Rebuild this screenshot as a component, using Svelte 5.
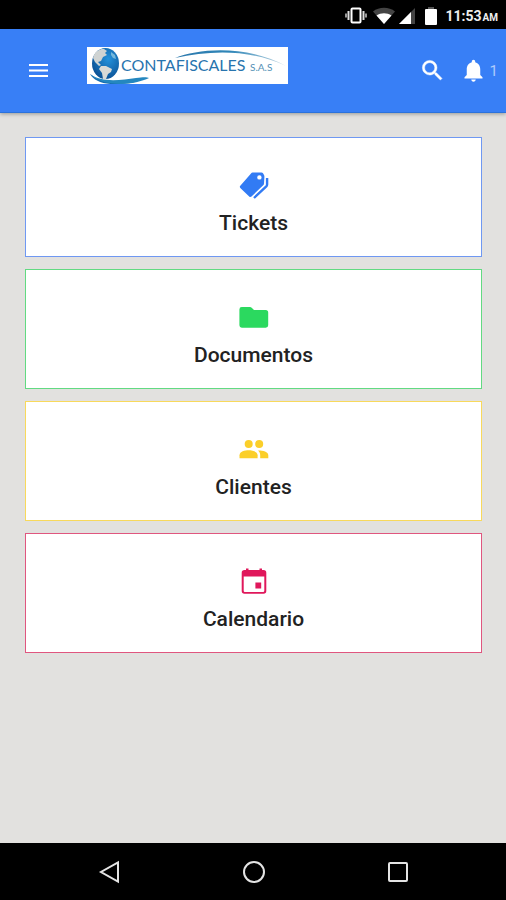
<script>
  const cards = [
    { id: "tickets", title: "Tickets" },
    { id: "documents", title: "Documentos" },
    { id: "clients", title: "Clientes" },
    { id: "calendar", title: "Calendario" }
  ];

  let notifications = 1;
</script>

<div class="screen">
  <div class="status">
    <svg width="22" height="18" viewBox="0 0 22 18" aria-hidden="true">
      <rect x="6.5" y="1.5" width="9" height="14" rx="1" fill="none" stroke="#fff" stroke-width="2" />
      <path d="M3.5 4v9M18.5 4v9" stroke="#ddd" stroke-width="2" />
      <path d="M1 6.5v4M21 6.5v4" stroke="#999" stroke-width="2" />
    </svg>
    <svg class="wifi" width="22" height="18" viewBox="0 0 22 18" aria-hidden="true">
      <path d="M0 4.5C6-.5 16-.5 22 4.5L11 17Z" fill="#444" />
      <path d="M3.500 8.500C8 5.500 14 5.500 18.500 8.500L11 17Z" fill="#fff" />
    </svg>
    <svg class="signal" width="18" height="18" viewBox="0 0 18 18" aria-hidden="true">
      <path d="M17 1v16H1Z" fill="#444" />
      <path d="M13 5V17H1Z" fill="#fff" />
    </svg>
    <svg class="battery" width="12" height="18" viewBox="0 0 12 18" aria-hidden="true">
      <path d="M3 0h6v3H3Z" fill="#555" />
      <rect y="2" width="12" height="16" rx="1" fill="#fff" />
    </svg>
    <span class="time">11:53<small>AM</small></span>
  </div>

  <header>
    <button class="iconButton" aria-label="Menu">
      <svg width="26" height="26" viewBox="0 0 26 26">
        <path d="M4 7h19M4 12.500h19M4 18h19" stroke="#fff" stroke-width="2.2" />
      </svg>
    </button>
    <a class="logo" href="#home" aria-label="Contafiscales SAS">
      <svg width="201" height="37" viewBox="0 0 201 37">
        <defs>
          <radialGradient id="globe" cx=".6" cy=".35" r=".7">
            <stop offset="0" stop-color="#2492dc" />
            <stop offset="1" stop-color="#0a4f92" />
          </radialGradient>
          <linearGradient id="arc">
            <stop offset="0" stop-color="#2d79ad" />
            <stop offset=".5" stop-color="#2f86b8" />
            <stop offset="1" stop-color="#c8dbe5" />
          </linearGradient>
        </defs>
        <rect width="201" height="37" fill="#fff" />
        <ellipse cx="18.5" cy="16.5" rx="13.5" ry="15.5" fill="url(#globe)" />
        <path d="M7 8C9 4 13 1.5 17 2l3 2-2 2 2 2-4 2-2 4-3 1 3 3-2 1-4-4-2-4Z" fill="#cfd3d2" />
        <path d="M14 19l5 0 6 3-1 3-3 2-2 5h-3l-1-6-3-4Z" fill="#d9dad6" />
        <path d="M24 5l4 3 1 4-3-1-2-3Z" fill="#73b7dc" />
        <path d="M3 27C15 37 32 35 62 31C52 33 47 37 32 37C17 38 7 34 3 27Z" fill="#176eb0" />
        <path d="M3 27C15 36 34 33 49 31C56 30 60 30 62 31C48 38 17 41 3 27Z" fill="#2487bf" />
        <path d="M88 11C113 1 160-2 199 19C163 2 124 3 88 11Z" fill="url(#arc)" />
        <text x="34" y="24" font-size="16" fill="#2874ae">CONTAFISCALES</text>
        <text x="163" y="24" font-size="10" fill="#5490b5">S.A.S</text>
      </svg>
    </a>
    <div class="actions">
      <button class="iconButton" aria-label="Buscar">
        <svg width="27" height="27" viewBox="0 0 24 24" fill="#fff" stroke="#fff" stroke-width=".4">
          <path d="M15.5 14h-.79l-.28-.27A6.47 6.47 0 0 0 16 9.5 6.5 6.5 0 1 0 9.5 16c1.61 0 3.09-.59 4.23-1.57l.27.28v.79l5 4.99L20.49 19l-4.99-5zm-6 0C7.01 14 5 11.99 5 9.5S7.01 5 9.5 5 14 7.01 14 9.5 11.99 14 9.5 14z" />
        </svg>
      </button>
      <button class="iconButton bell" aria-label="Notificaciones">
        <svg width="27" height="27" viewBox="0 0 24 24" fill="#fff">
          <path d="M12 22c1.1 0 2-.9 2-2h-4c0 1.1.89 2 2 2zm6-6v-5c0-3.07-1.64-5.64-4.5-6.32V4c0-.83-.67-1.5-1.500-1.500s-1.500.67-1.500 1.500v.68C7.63 5.36 6 7.92 6 11v5l-2 2v1h16v-1l-2-2z" />
        </svg>
        <span>{notifications}</span>
      </button>
    </div>
  </header>

  <main>
    {#each cards as card}
      <button class="card {card.id}">
        <svg width="30" height="30" viewBox="0 0 30 30" fill="currentColor" aria-hidden="true">
          {#if card.id == "tickets"}
            <path fill-rule="evenodd" d="M13.5 2.5H22.5Q23.5 2.5 24 3.2L25 5Q25.500 6 25.4 7L25 13.5Q25 14.500 24.2 15.2L12.5 26.5Q11.3 27.5 10.2 26.4L1.3 18Q.3 16.8 1.3 15.7L12 3.4Q12.7 2.5 13.5 2.5ZM20.4 5.2A2.2 2.2 0 1 0 20.4 9.6A2.2 2.2 0 1 0 20.4 5.2Z" />
            <path d="M28.1 8v6.5Q28.1 15.500 27.300 16.300L15 28" fill="none" stroke="currentColor" stroke-width="2.4" />
          {:else if card.id == "documents"}
            <path d="M2.8 5H11Q12 5 12.7 5.8L15 8H26.7Q29.2 8 29.2 10.5V23.3Q29.2 25.7 26.7 25.7H2.8Q.4 25.7 .4 23.3V7.4Q.4 5 2.8 5Z" />
          {:else if card.id == "clients"}
            <circle cx="9.7" cy="10" r="4" />
            <circle cx="20.2" cy="10" r="4" />
            <path d="M.5 24.2V21.2C.5 17.5 6 16.3 9.6 16.3S18.6 17.5 18.6 21.2V24.2Z" />
            <path d="M19 16.4C23 16.2 29.3 17.5 29.3 21.2V24.2H21.2V21.2C21.2 19 20.4 17.5 19 16.4Z" />
          {:else}
            <path fill-rule="evenodd" d="M7 2.5h2.5v1.5h11V2.5H23v1.5h1.5Q27.3 4 27.3 6.8V25Q27.3 27.7 24.5 27.7H5.5Q2.7 27.7 2.7 25V6.8Q2.7 4 5.5 4H7ZM4.7 10.5V24.7Q4.7 25.9 5.9 25.9H24.1Q25.3 25.9 25.3 24.7V10.5Z" />
            <path d="M16.4 16.6h5.8v5.8h-5.8Z" />
          {/if}
        </svg>
        <span>{card.title}</span>
      </button>
    {/each}
  </main>

  <nav>
    <button aria-label="Atrás">
      <svg width="24" height="24" viewBox="0 0 24 24">
        <path d="M20 2.5v19L3 12Z" />
      </svg>
    </button>
    <button aria-label="Inicio">
      <svg width="24" height="24" viewBox="0 0 24 24">
        <circle cx="12" cy="12" r="10" />
      </svg>
    </button>
    <button aria-label="Recientes">
      <svg width="24" height="24" viewBox="0 0 24 24">
        <rect x="3" y="3" width="18" height="18" rx="1" />
      </svg>
    </button>
  </nav>
</div>

<style>
  :global(body) {
    margin: 0;
  }

  .screen {
    display: flex;
    flex-direction: column;
    min-height: 100vh;
    background-color: #e2e1df;
    font-family: Roboto, sans-serif;
  }

  svg {
    display: block;
    flex: 0 0 auto;
  }

  button {
    padding: 0;
    border: 0;
    background: none;
    font-family: inherit;
    cursor: pointer;
  }

  .status {
    display: flex;
    align-items: center;
    justify-content: flex-end;
    box-sizing: border-box;
    height: 29px;
    padding: 2px 8px 0 0;
    background-color: #000;
    color: #eee;
  }

  .wifi {
    margin-left: 6px;
  }

  .signal {
    margin-left: 3px;
  }

  .battery {
    margin: 0 8px 0 9px;
  }

  .time {
    font-size: 14px;
    font-weight: 700;
  }

  .time small {
    margin-left: 1px;
    font-size: 10px;
  }

  header {
    display: flex;
    align-items: center;
    box-sizing: border-box;
    height: 84px;
    padding: 0 8px 0 25px;
    background-color: #387ff6;
    border-bottom: 1px solid #2b72dc;
    box-shadow: 0 1px 4px #00000055;
  }

  .iconButton {
    display: flex;
    align-items: center;
  }

  .logo {
    margin: 0 0 10px 36px;
  }

  .logo text {
    font-family: Lato, sans-serif;
  }

  .actions {
    display: flex;
    align-items: center;
    gap: 14px;
    margin-left: auto;
  }

  .bell span {
    margin-left: 3px;
    font-size: 15px;
    color: #ffffff99;
  }

  main {
    display: flex;
    flex-direction: column;
    flex: 1 0 auto;
    gap: 12px;
    padding: 24px 24px 24px 25px;
  }

  .card {
    display: flex;
    flex-direction: column;
    align-items: center;
    gap: 11px;
    padding: 32px 16px 21px;
    background-color: #fff;
    border: 1px solid;
  }

  .card span {
    font-size: 21px;
    font-weight: 500;
    line-height: 24px;
    color: #222;
  }

  .tickets {
    color: #327bf4;
    border-color: #6f98f2;
  }

  .documents {
    color: #2bd95f;
    border-color: #62da82;
  }

  .clients {
    color: #fbcf2a;
    border-color: #f8d95c;
  }

  .calendar {
    color: #e0175b;
    border-color: #e0567f;
  }

  nav {
    display: flex;
    align-items: center;
    justify-content: space-around;
    box-sizing: border-box;
    height: 57px;
    padding: 0 36px 0 38px;
    background-color: #000;
  }

  nav svg {
    fill: none;
    stroke: #e4e4e4;
    stroke-width: 2;
  }
</style>
